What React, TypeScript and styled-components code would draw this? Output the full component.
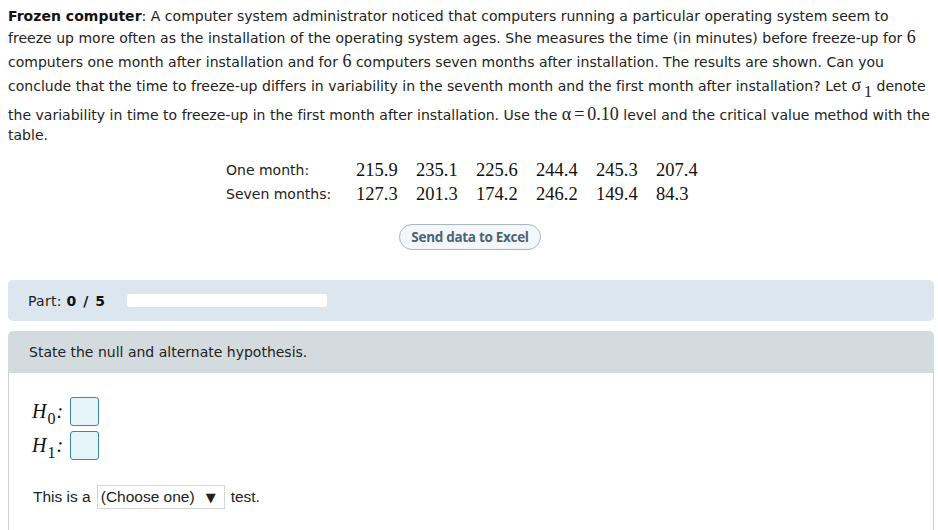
import styled, { createGlobalStyle } from "styled-components";

const GlobalStyle = createGlobalStyle`
  html, body {
    margin: 0;
    padding: 0;
    background: #ffffff;
    overflow: hidden;
  }
  body {
    font-family: "DejaVu Sans", Verdana, sans-serif;
    font-size: 14px;
    color: #222;
  }
`;

const rows = [
  { label: "One month:", values: ["215.9", "235.1", "225.6", "244.4", "245.3", "207.4"] },
  { label: "Seven months:", values: ["127.3", "201.3", "174.2", "246.2", "149.4", "84.3"] },
];

const App = () => {
  return (
    <Page>
      <GlobalStyle />
      <Problem>
        <Line $gap={0}>
          <b>Frozen computer</b>: A computer system administrator noticed that computers running a
          particular operating system seem to
        </Line>
        <Line $gap={0}>
          freeze up more often as the installation of the operating system ages. She measures the time
          (in minutes) before freeze-up for <M>6</M>
        </Line>
        <Line $gap={3}>
          computers one month after installation and for <M>6</M> computers seven months after
          installation. The results are shown. Can you
        </Line>
        <Line $gap={3}>
          conclude that the time to freeze-up differs in variability in the seventh month and the first
          month after installation? Let{" "}
          <M>
            σ<Sub>1</Sub>
          </M>{" "}
          denote
        </Line>
        <Line $gap={8}>
          the variability in time to freeze-up in the first month after installation. Use the{" "}
          <M>
            α<Eq>=</Eq>0.10
          </M>{" "}
          level and the critical value method with the
        </Line>
        <Line $gap={0}>table.</Line>
      </Problem>

      <DataTable>
        <tbody>
          {rows.map((row) => (
            <tr key={row.label}>
              <LabelCell>{row.label}</LabelCell>
              {row.values.map((v, i) => (
                <NumCell key={i}>{v}</NumCell>
              ))}
            </tr>
          ))}
        </tbody>
      </DataTable>

      <ButtonRow>
        <ExcelButton>Send data to Excel</ExcelButton>
      </ButtonRow>

      <PartBar>
        <PartLabel>
          Part: <PartNum>0 / 5</PartNum>
        </PartLabel>
        <Progress />
      </PartBar>

      <Question>
        <QuestionHead>State the null and alternate hypothesis.</QuestionHead>
        <QuestionBody>
          <Hypotheses>
            <HypRow>
              <HLabel>
                H<HSub>0</HSub>:
              </HLabel>
              <AnswerBox />
            </HypRow>
            <HypRow>
              <HLabel>
                H<HSub>1</HSub>:
              </HLabel>
              <AnswerBox />
            </HypRow>
          </Hypotheses>
          <Sentence>
            This is a
            <Choose>
              (Choose one) <Arrow>▼</Arrow>
            </Choose>
            test.
          </Sentence>
        </QuestionBody>
      </Question>
    </Page>
  );
};

export default App;

const Page = styled.div`
  padding: 6px 4px 0 8px;
  width: 938px;
  box-sizing: border-box;
`;

const Problem = styled.div`
  color: #222;
  b {
    font-weight: bold;
    color: #111;
  }
`;

const Line = styled.div<{ $gap: number }>`
  margin-top: ${(p) => p.$gap}px;
  height: 21px;
  line-height: 21px;
  white-space: nowrap;
  letter-spacing: 0.02px;
`;

const M = styled.span`
  font-family: "Liberation Serif", "Times New Roman", serif;
  font-size: 18px;
  letter-spacing: 0;
`;

const Eq = styled.span`
  display: inline-block;
  margin: 0 3px;
`;

const Sub = styled.span`
  position: relative;
  top: 6px;
  font-size: 16px;
  margin-left: 3px;
`;

const DataTable = styled.table`
  margin: 12px 0 0 218px;
  border-collapse: collapse;
`;

const LabelCell = styled.td`
  padding: 0;
  width: 130px;
  height: 24px;
  font-size: 14px;
  color: #222;
`;

const NumCell = styled.td`
  padding: 0;
  width: 60px;
  font-family: "Liberation Serif", "Times New Roman", serif;
  font-size: 18.5px;
  color: #111;
`;

const ButtonRow = styled.div`
  display: flex;
  justify-content: center;
  margin-top: 18px;
  padding-right: 2px;
`;

const ExcelButton = styled.button`
  height: 26px;
  padding: 0 11px;
  border: 1px solid #aab6be;
  border-radius: 13px;
  background: #f4f7f9;
  color: #4b6373;
  font-family: "Open Sans", Lato, sans-serif;
  font-weight: 700;
  font-size: 13.5px;
  letter-spacing: -0.3px;
`;

const PartBar = styled.div`
  margin-top: 30px;
  height: 41px;
  border-radius: 5px;
  background: #dbe6ef;
  display: flex;
  align-items: center;
  padding-left: 20px;
  color: #222;
`;

const PartLabel = styled.span`
  width: 99px;
  letter-spacing: 0.3px;
`;

const PartNum = styled.b`
  font-weight: bold;
  color: #111;
  letter-spacing: 1px;
`;

const Progress = styled.div`
  width: 200px;
  height: 13px;
  border-radius: 3px;
  background: #ffffff;
`;

const Question = styled.div`
  margin-top: 10px;
`;

const QuestionHead = styled.div`
  height: 42px;
  border-radius: 5px 5px 0 0;
  background: #d3dbde;
  display: flex;
  align-items: center;
  padding-left: 21px;
  color: #222;
`;

const QuestionBody = styled.div`
  box-sizing: border-box;
  height: 160px;
  border-left: 1px solid #d0d0d0;
  border-right: 1px solid #d0d0d0;
  padding: 24px 0 0 23px;
`;

const Hypotheses = styled.div`
  display: flex;
  flex-direction: column;
  gap: 5px;
`;

const HypRow = styled.div`
  display: flex;
  align-items: center;
  gap: 8px;
`;

const HLabel = styled.span`
  font-family: "Liberation Serif", "Times New Roman", serif;
  font-style: italic;
  font-size: 20px;
  color: #111;
  width: 30px;
  white-space: nowrap;
  text-align: right;
`;

const HSub = styled.span`
  position: relative;
  top: 6px;
  font-style: normal;
  font-size: 16px;
  margin: 0 1px 0 1px;
`;

const AnswerBox = styled.div`
  width: 27px;
  height: 27px;
  border: 1px solid #3d8c88;
  border-radius: 3px;
  background: #e5f4f8;
`;

const Sentence = styled.div`
  margin-top: 25px;
  display: flex;
  align-items: center;
  gap: 6px;
  padding-left: 1px;
  font-family: "Liberation Sans", Arial, sans-serif;
  font-size: 15.5px;
  color: #222;
`;

const Choose = styled.div`
  height: 24px;
  box-sizing: border-box;
  border: 1px solid #d6d6d6;
  padding: 0 8px 0 3px;
  display: flex;
  align-items: center;
  gap: 11px;
  font-family: "Liberation Sans", Arial, sans-serif;
  font-size: 15.5px;
  color: #222;
`;

const Arrow = styled.span`
  font-family: "DejaVu Sans", sans-serif;
  font-size: 13px;
`;
